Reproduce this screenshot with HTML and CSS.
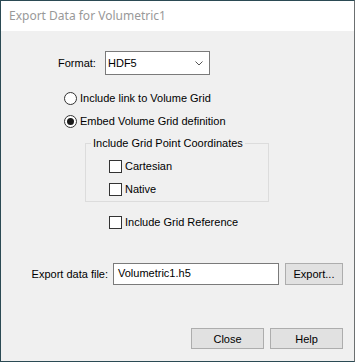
FILE: index.html
```html
<!DOCTYPE html>
<html lang="en">
<head>
    <meta charset="UTF-8">
    <title>Export Data for Volumetric1</title>
    <link rel="stylesheet" href="styles.css">
</head>
<body>
    <div class="window">
        <div class="titlebar">Export Data for Volumetric1</div>
        <div class="content">
            <div class="format-row">
                <span class="format-label">Format:</span>
                <div class="select">
                    <span>HDF5</span>
                    <svg class="chevron" width="8" height="5" viewBox="0 0 8 5">
                        <polyline points="0.5,0.5 4,4 7.5,0.5" fill="none" stroke="#555" stroke-width="1"/>
                    </svg>
                </div>
            </div>

            <label class="option radio-first">
                <span class="radio"></span>Include link to Volume Grid
            </label>
            <label class="option radio-second">
                <span class="radio checked"></span>Embed Volume Grid definition
            </label>

            <fieldset class="group">
                <legend>Include Grid Point Coordinates</legend>
                <label class="option check-first">
                    <span class="check"></span>Cartesian
                </label>
                <label class="option check-second">
                    <span class="check"></span>Native
                </label>
            </fieldset>

            <label class="option grid-ref">
                <span class="check"></span>Include Grid Reference
            </label>

            <div class="file-row">
                <span class="file-label">Export data file:</span>
                <div class="textbox">Volumetric1.h5</div>
                <button class="btn export-btn">Export...</button>
            </div>

            <div class="button-row">
                <button class="btn">Close</button>
                <button class="btn">Help</button>
            </div>
        </div>
    </div>
</body>
</html>
```

FILE: styles.css
```css
html, body {
    margin: 0;
    padding: 0;
    background: #2f4e57;
}
.window {
    box-sizing: border-box;
    width: 355px;
    height: 362px;
    border: 1px solid #2b4a54;
    border-right-color: #6b6f70;
    background-color: #f0f0f0;
    font-family: "Liberation Sans", Arial, sans-serif;
    font-size: 11px;
    color: #000;
}
.titlebar {
    height: 30px;
    background-color: #fff;
    color: #999;
    font-family: "Noto Sans", "Open Sans", sans-serif;
    font-size: 12px;
    line-height: 30px;
    padding-left: 8px;
}
.content {
    display: flex;
    flex-direction: column;
    align-items: flex-start;
}
.format-row {
    display: flex;
    align-items: center;
    margin-top: 20px;
    margin-left: 57px;
    height: 24px;
}
.format-label {
    width: 47px;
}
.select {
    box-sizing: border-box;
    width: 105px;
    height: 24px;
    background-color: #fff;
    border: 1px solid #7a7a7a;
    display: flex;
    align-items: center;
    justify-content: space-between;
    padding: 0 6px 0 2px;
}
.option {
    display: flex;
    align-items: center;
    height: 16px;
    white-space: nowrap;
}
.radio {
    box-sizing: border-box;
    width: 13px;
    height: 13px;
    border: 1px solid #333;
    border-radius: 50%;
    background-color: #fff;
    margin-right: 3px;
    display: flex;
    align-items: center;
    justify-content: center;
}
.radio.checked::after {
    content: "";
    width: 7px;
    height: 7px;
    border-radius: 50%;
    background-color: #1a1a1a;
}
.check {
    box-sizing: border-box;
    width: 13px;
    height: 13px;
    border: 1px solid #333;
    background-color: #fff;
    margin-right: 3px;
}
.radio-first {
    margin-top: 15px;
    margin-left: 63px;
}
.radio-second {
    margin-top: 7px;
    margin-left: 63px;
}
.group {
    box-sizing: border-box;
    width: 184px;
    margin: 7px 0 0 84px;
    padding: 0 0 4px 0;
    border: 1px solid #dcdcdc;
    min-width: 0;
}
.group legend {
    margin-left: 5px;
    padding: 0 2px;
    line-height: 14px;
}
.check-first {
    margin-top: 8px;
    margin-left: 23px;
}
.check-second {
    margin-top: 7px;
    margin-left: 23px;
}
.grid-ref {
    margin-top: 12px;
    margin-left: 108px;
}
.file-row {
    display: flex;
    align-items: center;
    align-self: stretch;
    justify-content: flex-end;
    margin-top: 33px;
    padding-right: 11px;
    height: 22px;
}
.file-label {
    margin-right: 5px;
}
.textbox {
    box-sizing: border-box;
    width: 166px;
    height: 22px;
    background-color: #fff;
    border: 1px solid #7a7a7a;
    padding: 0 4px;
    line-height: 18px;
}
.btn {
    box-sizing: border-box;
    height: 21px;
    width: 73px;
    background-color: #e1e1e1;
    border: 1px solid #adadad;
    font-family: "Liberation Sans", Arial, sans-serif;
    font-size: 11px;
    color: #000;
    padding: 0;
}
.export-btn {
    width: 58px;
    height: 22px;
    margin-left: 6px;
}
.button-row {
    display: flex;
    align-self: stretch;
    justify-content: flex-end;
    gap: 6px;
    margin-top: 43px;
    padding-right: 11px;
}
```
